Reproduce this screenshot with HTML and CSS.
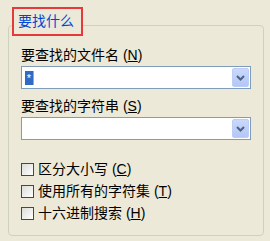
FILE: index.html
```html
<!DOCTYPE html>
<html lang="zh-CN">
<head>
    <meta charset="UTF-8">
    <title>要找什么</title>
    <link rel="stylesheet" href="styles.css">
</head>
<body>
    <div class="group">
        <div class="group-title">要找什么</div>

        <div class="field-label">要查找的文件名 (<u>N</u>)</div>
        <div class="combo">
            <div class="combo-text"><span class="selected">*</span></div>
            <div class="combo-btn">
                <svg width="9" height="6" viewBox="0 0 9 6"><path d="M1 1 L4.5 4.5 L8 1" fill="none" stroke="#4d6185" stroke-width="2"/></svg>
            </div>
        </div>

        <div class="field-label second">要查找的字符串 (<u>S</u>)</div>
        <div class="combo">
            <div class="combo-text"></div>
            <div class="combo-btn">
                <svg width="9" height="6" viewBox="0 0 9 6"><path d="M1 1 L4.5 4.5 L8 1" fill="none" stroke="#4d6185" stroke-width="2"/></svg>
            </div>
        </div>

        <div class="checks">
            <label class="check"><span class="box"></span>区分大小写 (<u>C</u>)</label>
            <label class="check"><span class="box"></span>使用所有的字符集 (<u>T</u>)</label>
            <label class="check"><span class="box"></span>十六进制搜索 (<u>H</u>)</label>
        </div>
    </div>
</body>
</html>
```

FILE: styles.css
```css
body {
    margin: 0;
    background-color: #ece9d8;
    font-family: "Liberation Sans", "Noto Sans CJK SC", sans-serif;
    font-size: 14px;
    color: #000;
}
.group {
    margin: 25px 0 0 8px;
    width: 256px;
    box-sizing: border-box;
    border: 1px solid #d0d0bf;
    border-radius: 4px;
    padding: 0 12px 11px 12px;
}
.group-title {
    display: inline-block;
    margin: -19px 0 0 -9px;
    height: 29px;
    width: 71px;
    box-sizing: border-box;
    border: 2px solid #e8383a;
    background-color: #ece9d8;
    color: #0046d5;
    font-size: 14px;
    line-height: 25px;
    padding-left: 4px;
    vertical-align: top;
}
.field-label {
    margin-top: 5px;
    line-height: 16px;
    height: 16px;
}
.field-label.second {
    margin-top: 9px;
}
u {
    text-decoration: underline;
}
.combo {
    margin-top: 3px;
    height: 23px;
    box-sizing: border-box;
    border: 1px solid #7f9db9;
    background-color: #fff;
    display: flex;
    padding: 1px;
}
.combo-text {
    flex: 1;
    display: flex;
    align-items: center;
    padding-left: 2px;
}
.selected {
    display: inline-block;
    width: 8px;
    height: 14px;
    background-color: #316ac5;
    border-right: 1px solid #e0a040;
    color: #fff;
    font-size: 11px;
    line-height: 14px;
    text-align: center;
}
.combo-btn {
    width: 17px;
    border-radius: 2px;
    background: linear-gradient(#c9d8fc, #b3c7f6);
    border: 1px solid #bccdf7;
    box-sizing: border-box;
    display: flex;
    align-items: center;
    justify-content: center;
}
.checks {
    margin-top: 18px;
}
.check {
    display: flex;
    align-items: center;
    height: 22px;
    line-height: 22px;
}
.box {
    width: 13px;
    height: 13px;
    box-sizing: border-box;
    border: 1px solid #1c5180;
    background: linear-gradient(135deg, #dcdcd7, #fff);
    margin-right: 4px;
}
```
